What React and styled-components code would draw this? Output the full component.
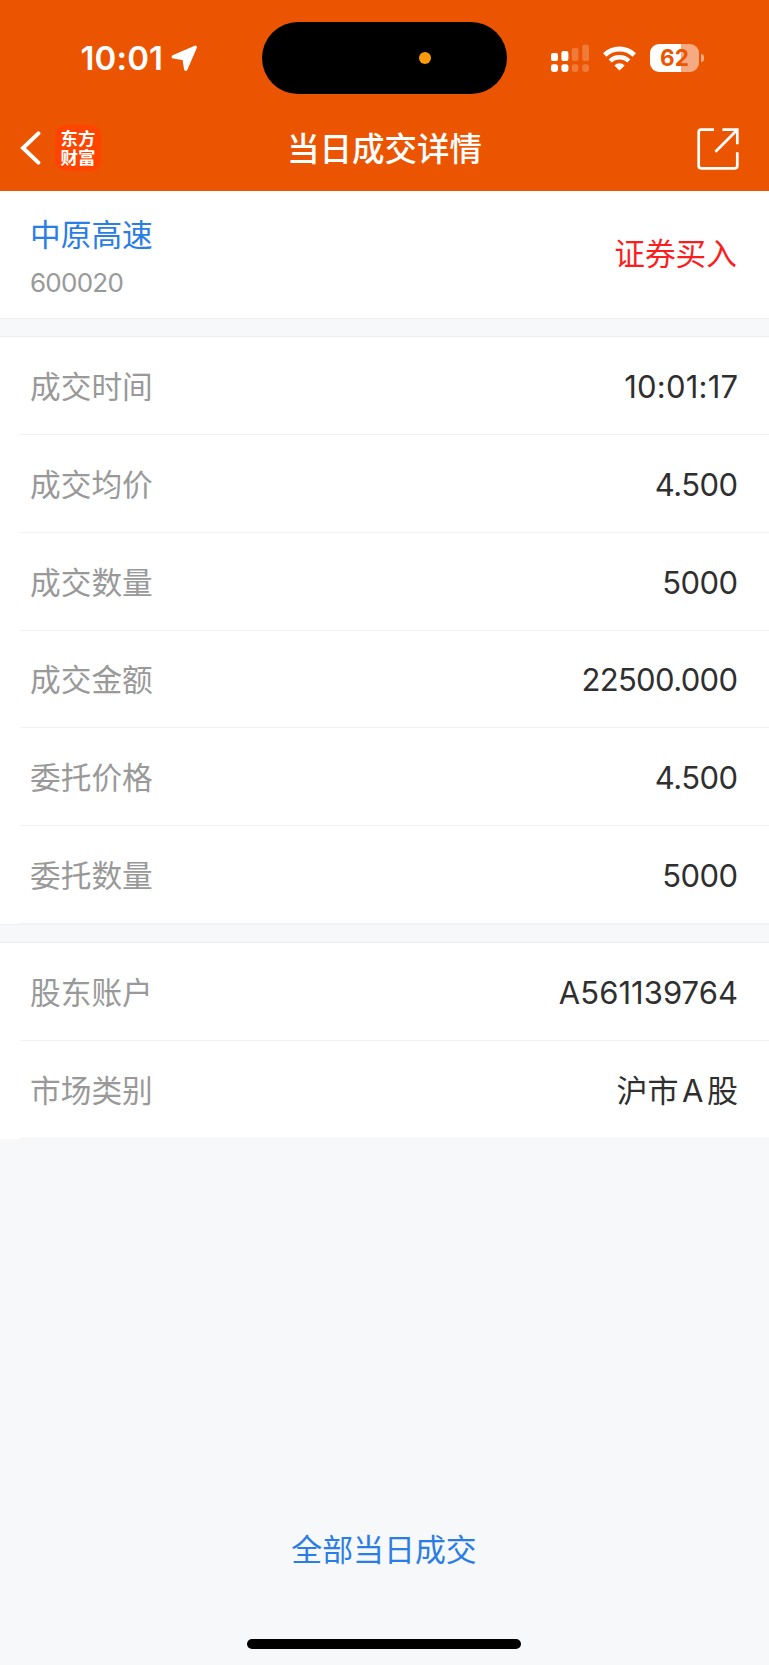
import React from 'react';
import styled, { createGlobalStyle } from 'styled-components';

const GlobalStyle = createGlobalStyle`
  * { box-sizing: border-box; }
  body {
    margin: 0;
    background: #f6f8fa;
    font-family: Inter, "Noto Sans CJK SC", sans-serif;
  }
`;

const Screen = styled.div`
  display: flex;
  flex-direction: column;
  width: 769px;
  height: 1665px;
  background: #f6f8fa;
`;

const Header = styled.header`
  flex: none;
  height: 191px;
  background: #eb5502;
  color: #fff;
`;

const StatusBar = styled.div`
  display: grid;
  grid-template-columns: 261.5px 245px 1fr;
  align-items: center;
  height: 105px;
  padding: 22px 0 11px;
`;

const StatusLeft = styled.div`
  display: flex;
  align-items: center;
  gap: 7.5px;
  padding-left: 80.5px;
`;

const Clock = styled.span`
  font-size: 33px;
  line-height: 40px;
  font-weight: 600;
  letter-spacing: 0.15px;
`;

const Island = styled.div`
  display: flex;
  align-items: center;
  justify-content: flex-end;
  height: 72px;
  padding-right: 75.5px;
  border-radius: 36px;
  background: #000;
`;

const MicDot = styled.span`
  width: 12px;
  height: 12px;
  border-radius: 50%;
  background: #ff9b0a;
`;

const StatusRight = styled.div`
  display: flex;
  align-items: center;
  padding-left: 44.5px;
  height: 28px;
`;

const WifiBox = styled.span`
  display: flex;
  margin: 0 14px 0 14px;
`;

const Battery = styled.span`
  display: flex;
  align-items: center;
  justify-content: center;
  width: 49px;
  height: 28px;
  border-radius: 9px;
  background: linear-gradient(to right, #fff 63.5%, #f5aa81 63.5%);
  color: #eb5502;
  font-size: 22.5px;
  line-height: 26px;
  padding-bottom: 1px;
  font-weight: 700;
`;

const BatteryNub = styled.span`
  width: 3px;
  height: 8px;
  margin-left: 2px;
  border-radius: 0 4px 4px 0;
  background: #f5aa81;
`;

const NavBar = styled.nav`
  display: grid;
  grid-template-columns: 160px 1fr 160px;
  align-items: center;
  height: 86px;
`;

const NavLeft = styled.div`
  display: flex;
  align-items: center;
  gap: 14px;
  padding-left: 20px;
`;

const NavRight = styled.div`
  display: flex;
  justify-content: flex-end;
  padding: 2px 30px 0 0;
`;

const Logo = styled.span`
  width: 46px;
  height: 46px;
  padding: 3px 5px 0;
  border-radius: 10px;
  background: #ff4400;
  font-family: "Noto Sans CJK SC", sans-serif;
  font-size: 17.4px;
  line-height: 19px;
  font-weight: 700;
  text-align: center;
`;

const Title = styled.h1`
  margin: 0;
  padding-top: 4px;
  text-align: center;
  font-size: 32.5px;
  line-height: 48px;
  font-weight: 500;
`;

const Stock = styled.section`
  flex: none;
  display: flex;
  justify-content: space-between;
  align-items: center;
  height: 127px;
  padding: 0 32px 0 30px;
  background: #fff;
`;

const StockName = styled.div`
  padding-top: 4px;
  font-size: 30.7px;
  line-height: 48px;
  color: #2b7de6;
`;

const StockCode = styled.div`
  margin-top: 4px;
  font-size: 26px;
  line-height: 40px;
  letter-spacing: -0.75px;
  color: #999;
`;

const Side = styled.div`
  padding-bottom: 2px;
  font-size: 30.7px;
  line-height: 48px;
  color: #fa1e1e;
`;

const Gap = styled.div`
  flex: none;
  height: 19.3px;
  border-top: 1px solid #eef0f2;
  border-bottom: 1px solid #eaecef;
  background: #f6f8fa;
`;

const Group = styled.section`
  flex: none;
  background: #fff;
`;

const Row = styled.div`
  display: flex;
  justify-content: space-between;
  align-items: center;
  height: 97.8px;
  margin-left: 20px;
  padding: 2.6px 31px 0 10px;
  border-bottom: 1px solid #f1f2f4;
`;

const Label = styled.span`
  font-size: 30.7px;
  line-height: 48px;
  color: #999;
`;

const Value = styled.span`
  font-size: 31px;
  line-height: 48px;
  letter-spacing: ${({ $tracking }) => $tracking}px;
  margin-right: ${({ $tracking }) => -$tracking}px;
  color: #2f2f2f;
`;

const Latin = styled.span`
  padding: 0 3.5px;
`;

const Footer = styled.footer`
  flex: 1;
  display: flex;
  flex-direction: column;
  align-items: center;
  justify-content: flex-end;
  padding: 0 1px 16px 0;
`;

const AllTrades = styled.a`
  margin-bottom: 65px;
  font-size: 30.9px;
  line-height: 48px;
  color: #2b7de6;
`;

const HomeIndicator = styled.div`
  width: 274px;
  height: 10px;
  border-radius: 5px;
  background: #000;
`;

const trade = [
  { label: '成交时间', value: '10:01:17', tracking: 0.2 },
  { label: '成交均价', value: '4.500', tracking: -0.55 },
  { label: '成交数量', value: '5000', tracking: -0.6 },
  { label: '成交金额', value: '22500.000', tracking: -0.65 },
  { label: '委托价格', value: '4.500', tracking: -0.55 },
  { label: '委托数量', value: '5000', tracking: -0.6 },
];

const account = [
  { label: '股东账户', value: 'A561139764', tracking: 0.05 },
  { label: '市场类别', value: <>沪市<Latin>A</Latin>股</>, tracking: 0 },
];

const Rows = ({ items }) => (
  <Group>
    {items.map(({ label, value, tracking }) => (
      <Row key={label}>
        <Label>{label}</Label>
        <Value $tracking={tracking}>{value}</Value>
      </Row>
    ))}
  </Group>
);

const LocationIcon = () => (
  <svg width="27" height="27" viewBox="0 0 27 27">
    <path
      d="M24.3 2.2 2.3 11.8 13 13.6 14.8 24.2Z"
      fill="#fff"
      stroke="#fff"
      strokeWidth="3.4"
      strokeLinejoin="round"
    />
  </svg>
);

const SignalIcon = () => (
  <svg width="38" height="28" viewBox="0 0 38 28" fill="#fff">
    <rect x="0" y="9" width="7" height="8" rx="2" />
    <rect x="10.4" y="7" width="7" height="10" rx="2" />
    <rect x="20.8" y="4" width="6.6" height="13" rx="2" opacity=".22" />
    <rect x="31.2" y="0.8" width="6.8" height="16.2" rx="2" opacity=".22" />
    <rect x="0" y="20.2" width="7" height="7.8" rx="2.4" />
    <rect x="10.4" y="20.2" width="7" height="7.8" rx="2.4" />
    <rect x="20.8" y="20.2" width="6.6" height="7.8" rx="2.4" opacity=".22" />
    <rect x="31.2" y="20.2" width="6.8" height="7.8" rx="2.4" opacity=".22" />
  </svg>
);

const WifiIcon = () => (
  <svg width="33" height="25" viewBox="0 0 33 25" fill="none" stroke="#fff">
    <path d="M1.7 8.9A21.5 21.5 0 0 1 31.3 8.9" strokeWidth="4.8" />
    <path d="M7.2 15A13.3 13.3 0 0 1 25.8 15" strokeWidth="4.5" />
    <path d="M16.5 24.5 11.3 19.5A7.4 7.4 0 0 1 21.7 19.5Z" fill="#fff" stroke="none" />
  </svg>
);

const BackIcon = () => (
  <svg width="21" height="34" viewBox="0 0 21 34" fill="none" stroke="#fff" strokeWidth="4">
    <path d="M18.4 2.4 3 17 18.4 31.6" strokeLinecap="round" />
  </svg>
);

const ShareIcon = () => (
  <svg width="42" height="42" viewBox="0 0 42 42" fill="none" stroke="#fff" strokeWidth="2.7">
    <path d="M17 1.7H4.2Q1.7 1.7 1.7 4.2V37.8Q1.7 40.3 4.2 40.3H37.8Q40.3 40.3 40.3 37.8V24.2" />
    <path d="M25.4 1.7H40.3V16.3M39.8 2.2 18.4 23.8" />
  </svg>
);

export default function App() {
  return (
    <Screen>
      <GlobalStyle />
      <Header>
        <StatusBar>
          <StatusLeft>
            <Clock>10:01</Clock>
            <LocationIcon />
          </StatusLeft>
          <Island>
            <MicDot />
          </Island>
          <StatusRight>
            <SignalIcon />
            <WifiBox>
              <WifiIcon />
            </WifiBox>
            <Battery>62</Battery>
            <BatteryNub />
          </StatusRight>
        </StatusBar>
        <NavBar>
          <NavLeft>
            <BackIcon />
            <Logo>东方财富</Logo>
          </NavLeft>
          <Title>当日成交详情</Title>
          <NavRight>
            <ShareIcon />
          </NavRight>
        </NavBar>
      </Header>
      <Stock>
        <div>
          <StockName>中原高速</StockName>
          <StockCode>600020</StockCode>
        </div>
        <Side>证券买入</Side>
      </Stock>
      <Gap />
      <Rows items={trade} />
      <Gap />
      <Rows items={account} />
      <Footer>
        <AllTrades>全部当日成交</AllTrades>
        <HomeIndicator />
      </Footer>
    </Screen>
  );
}
